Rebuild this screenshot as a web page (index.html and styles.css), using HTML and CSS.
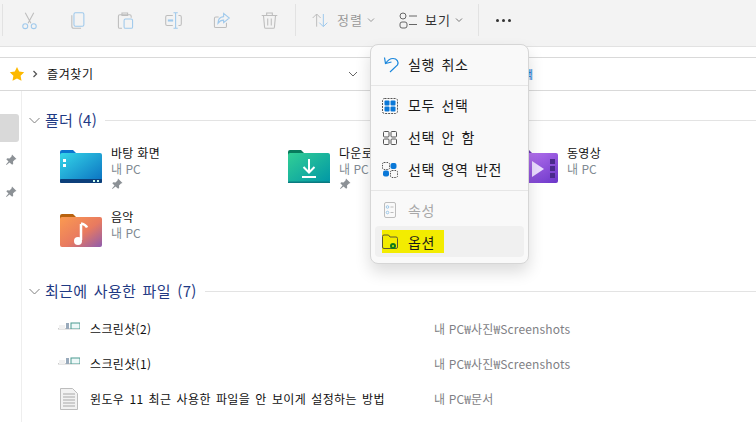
FILE: index.html
```html
<!DOCTYPE html>
<html lang="ko">
<head>
<meta charset="utf-8">
<title>즐겨찾기</title>
<link rel="stylesheet" href="styles.css">
</head>
<body>
<div class="toolbar">
  <span class="sep first"></span>
  <button class="tool"><svg viewBox="0 0 24 24" fill="none"><path class="g" d="M6 1l8 15M18 1l-8 15"/><circle class="b" cx="6" cy="20" r="3.500"/><circle class="b" cx="18" cy="20" r="3.500"/></svg></button>
  <button class="tool"><svg viewBox="0 0 24 24" fill="none"><rect class="b" x="7" y="1" width="14" height="19" rx="2"/><path class="g" d="M4 4.500V20a3 3 0 0 0 3 3h10"/></svg></button>
  <button class="tool"><svg viewBox="0 0 24 24" fill="none"><path class="g" d="M7 23H4a2 2 0 0 1-2-2V6a2 2 0 0 1 2-2h14a2 2 0 0 1 2 2v2M7 4V1.500h8V5H7z"/><rect class="b" x="10" y="10" width="12" height="13" rx="2"/></svg></button>
  <button class="tool"><svg viewBox="0 0 24 24" fill="none"><path class="g" d="M11 5H3a2 2 0 0 0-2 2v10a2 2 0 0 0 2 2h8M19 5h2a2 2 0 0 1 2 2v10a2 2 0 0 1-2 2h-2"/><path class="b" d="M12 1h6M15 1v22M12 23h6"/><path class="bf" d="M4 10.500h7.500V13.500H4z"/></svg></button>
  <button class="tool"><svg viewBox="0 0 24 24" fill="none"><path class="g" d="M19 15v5a2 2 0 0 1-2 2H4a2 2 0 0 1-2-2V9a2 2 0 0 1 2-2h4"/><path class="b" d="M15 2l8 6.500-8 6.500v-3.500c-4 0-6 1.500-8 4.500 0-5 3-9 8-9.500z"/></svg></button>
  <button class="tool"><svg viewBox="0 0 24 24" fill="none"><path class="g" d="M1 5h22M8 5V1.500h8V5M3.500 5l1.500 16a2 2 0 0 0 2 2h10a2 2 0 0 0 2-2l1.500-16M9.500 9v10M14.500 9v10"/></svg></button>
  <span class="sep"></span>
  <div class="labeled sort">
    <svg class="sort-icon" viewBox="0 0 24 24" fill="none"><path class="g" d="M7 22V3M1 9l6-6 6 6"/><path class="b" d="M17 3v19M11 16l6 6 6-6"/></svg>
    <span class="tool-label dim">정렬</span>
    <svg class="chev" width="8" height="6" viewBox="0 0 8 6" fill="none"><path d="M1 1.500l3 3 3-3" stroke="#9a9a9a"/></svg>
  </div>
  <div class="labeled view">
    <svg class="view-icon" viewBox="0 0 18 18" fill="none"><circle class="d" cx="4" cy="5" r="3"/><rect class="d" x="1" y="11" width="7" height="6" rx="2"/><path class="d" d="M10 5h8M10 13.500h8"/></svg>
    <span class="tool-label">보기</span>
    <svg class="chev" width="8" height="6" viewBox="0 0 8 6" fill="none"><path d="M1 1.500l3 3 3-3" stroke="#777"/></svg>
  </div>
  <span class="sep"></span>
  <div class="more"><i></i><i></i><i></i></div>
</div>

<div class="address">
  <svg class="star" width="16" height="16" viewBox="0 0 16 16"><path d="M8 1l2.200 4.600 5 .700-3.600 3.500.900 5L8 12.400l-4.500 2.400.900-5L.800 6.300l5-.700z" fill="#fdb900"/></svg>
  <svg class="crumb" width="6" height="8" viewBox="0 0 6 8" fill="none"><path d="M1.500 1l3 3-3 3" stroke="#555" stroke-width="1.300"/></svg>
  <span class="address-text">즐겨찾기</span>
  <svg class="address-chev" width="10" height="6" viewBox="0 0 10 6" fill="none"><path d="M1 1l4 4 4-4" stroke="#666"/></svg>
  <span class="search-hint">색</span>
</div>

<div class="body">
  <aside class="side">
    <div class="side-sel"></div>
    <svg class="side-pin" width="12" height="12" viewBox="0 0 12 12"><use href="#pin"/></svg>
    <svg class="side-pin" width="12" height="12" viewBox="0 0 12 12"><use href="#pin"/></svg>
  </aside>
  <main class="main">
    <h2 class="group-head folders">
      <svg width="11" height="7" viewBox="0 0 11 7" fill="none"><path d="M.500 1l5 5 5-5" stroke="#808080"/></svg>
      <span>폴더 (4)</span><i class="rule"></i>
    </h2>
    <div class="folder-grid">
      <div class="folder">
        <svg width="42" height="34" viewBox="0 0 42 34"><defs><linearGradient id="fb" x1="0" y1="0" x2="1" y2="1"><stop offset="0" stop-color="#35d6e8"/><stop offset="1" stop-color="#0a6fc0"/></linearGradient></defs><path d="M0 3a2 2 0 0 1 2-2h11l4 4v8H0z" fill="#0b76d0"/><rect y="4" width="42" height="30" rx="2" fill="url(#fb)"/><rect y="30" width="42" height="4" rx="1" fill="#0d3f7a"/><rect x="3" y="10" width="3" height="3" fill="#fff"/><rect x="3" y="15" width="3" height="3" fill="#fff"/><rect x="33" y="31" width="2" height="2" fill="#cfe"/><rect x="37" y="31" width="2" height="2" fill="#cfe"/></svg>
        <div class="folder-text"><b>바탕 화면</b><span>내 PC</span><svg class="pin" width="12" height="12" viewBox="0 0 12 12"><use href="#pin"/></svg></div>
      </div>
      <div class="folder">
        <svg width="42" height="34" viewBox="0 0 42 34"><defs><linearGradient id="fg" x1="0" y1="0" x2="1" y2="1"><stop offset="0" stop-color="#32cf95"/><stop offset="1" stop-color="#0096a6"/></linearGradient></defs><path d="M0 3a2 2 0 0 1 2-2h11l4 4v8H0z" fill="#087a5c"/><rect y="4" width="42" height="30" rx="2" fill="url(#fg)"/><rect y="32.500" width="42" height="1.500" fill="#0a7a80"/><path d="M21 10v13M15.500 18l5.500 5.500 5.500-5.500M14 28h14" stroke="#fff" stroke-width="2" fill="none"/></svg>
        <div class="folder-text"><b>다운로드</b><span>내 PC</span><svg class="pin" width="12" height="12" viewBox="0 0 12 12"><use href="#pin"/></svg></div>
      </div>
      <div class="folder">
        <svg width="42" height="34" viewBox="0 0 42 34"><defs><linearGradient id="fv" x1="0" y1="0" x2="1" y2="1"><stop offset="0" stop-color="#c27df5"/><stop offset="1" stop-color="#6a35c8"/></linearGradient></defs><path d="M0 3a2 2 0 0 1 2-2h11l4 4v8H0z" fill="#6a3cb0"/><rect y="4" width="42" height="30" rx="2" fill="url(#fv)"/><path d="M16 12l12 8-12 8z" fill="#eadcff"/><rect x="34" y="10" width="5" height="5" fill="#4a2a8c"/><rect x="34" y="17" width="5" height="5" fill="#4a2a8c"/><rect x="34" y="24" width="5" height="5" fill="#4a2a8c"/></svg>
        <div class="folder-text"><b>동영상</b><span>내 PC</span></div>
      </div>
      <div class="folder">
        <svg width="42" height="34" viewBox="0 0 42 34"><defs><linearGradient id="fm" x1="0" y1="0" x2="1" y2="1"><stop offset="0" stop-color="#fb9a50"/><stop offset=".55" stop-color="#e87a60"/><stop offset="1" stop-color="#8f5cae"/></linearGradient></defs><path d="M0 3a2 2 0 0 1 2-2h11l4 4v8H0z" fill="#b8620e"/><rect y="4" width="42" height="30" rx="2" fill="url(#fm)"/><path d="M21 11v16" stroke="#fff" stroke-width="2.500"/><path d="M21 10.500c2 .500 5 1.500 6 4" stroke="#fff" stroke-width="2.500" fill="none"/><circle cx="18" cy="28" r="4" fill="#fff"/></svg>
        <div class="folder-text"><b>음악</b><span>내 PC</span></div>
      </div>
    </div>

    <h2 class="group-head recent">
      <svg width="11" height="7" viewBox="0 0 11 7" fill="none"><path d="M.500 1l5 5 5-5" stroke="#808080"/></svg>
      <span>최근에 사용한 파일 (7)</span><i class="rule"></i>
    </h2>
    <div class="file"><svg class="file-icon" width="22" height="24" viewBox="0 0 22 24"><use href="#thumb"/></svg><span class="file-name">스크린샷(2)</span><span class="file-path">내 PC₩사진₩Screenshots</span></div>
    <div class="file"><svg class="file-icon" width="22" height="24" viewBox="0 0 22 24"><use href="#thumb"/></svg><span class="file-name">스크린샷(1)</span><span class="file-path">내 PC₩사진₩Screenshots</span></div>
    <div class="file"><svg class="file-icon" width="22" height="24" viewBox="0 0 22 24"><path d="M2.500 1.500h12l5 5v16h-17z" fill="#f2f2f2" stroke="#bdbdbd"/><path d="M5 7h12M5 10h12M5 13h12M5 16h12M5 19h12" stroke="#a8a8a8"/></svg><span class="file-name">윈도우 11 최근 사용한 파일을 안 보이게 설정하는 방법</span><span class="file-path">내 PC₩문서</span></div>
  </main>
</div>

<div class="menu">
  <div class="item"><svg width="20" height="20" viewBox="0 0 20 20" fill="none"><path d="M2.500 3.500l1 6 6-1.500M3.500 9.500C5.500 6.500 8 4.500 11 4.500c4 0 6 3.500 4.500 6.500L8 18" stroke="#1b87dc" stroke-width="1.200"/></svg><span>실행 취소</span></div>
  <hr class="div">
  <div class="item"><svg width="20" height="20" viewBox="2 -1 20 20" fill="none"><rect x="2.500" y="2.500" width="15" height="15" rx="2" stroke="#555" stroke-dasharray="2 1"/><rect x="4.500" y="4.500" width="5" height="5" rx="1" fill="#0a78d8"/><rect x="10.500" y="4.500" width="5" height="5" rx="1" fill="#0a78d8"/><rect x="4.500" y="10.500" width="5" height="5" rx="1" fill="#0a78d8"/><rect x="10.500" y="10.500" width="5" height="5" rx="1" fill="#0a78d8"/></svg><span>모두 선택</span></div>
  <div class="item"><svg width="20" height="20" viewBox="2 -1 20 20" fill="none"><rect x="3.500" y="3.500" width="5.500" height="5.500" rx="1" stroke="#555"/><rect x="11" y="3.500" width="5.500" height="5.500" rx="1" stroke="#555"/><rect x="3.500" y="11" width="5.500" height="5.500" rx="1" stroke="#555"/><rect x="11" y="11" width="5.500" height="5.500" rx="1" stroke="#555"/></svg><span>선택 안 함</span></div>
  <div class="item"><svg width="20" height="20" viewBox="2 -1 20 20" fill="none"><rect x="2.500" y="2.500" width="7" height="7" rx="1.500" stroke="#555" stroke-dasharray="1.500 1"/><rect x="10.500" y="3" width="6" height="6" rx="2" fill="#0a78d8"/><rect x="3" y="10.500" width="6" height="6" rx="2" fill="#0a78d8"/><rect x="10.500" y="10.500" width="7" height="7" rx="1.500" stroke="#555" stroke-dasharray="1.500 1"/></svg><span>선택 영역 반전</span></div>
  <hr class="div">
  <div class="item muted"><svg width="20" height="20" viewBox="2 0 20 20" fill="none"><rect x="4.500" y="2.500" width="11" height="15" rx="1.500" stroke="#bdbdbd"/><circle cx="7.500" cy="7" r="1.300" stroke="#9cc8ea"/><circle cx="7.500" cy="12.500" r="1.300" stroke="#9cc8ea"/><path d="M10.500 7h3M10.500 12.500h3" stroke="#bdbdbd"/></svg><span>속성</span></div>
  <div class="item hover"><div class="mark"><svg width="20" height="20" viewBox="0 0 20 20" fill="none"><path d="M.500 15V4.500A1.500 1.500 0 0 1 2 3h4.500L8 5h6a1.500 1.500 0 0 1 1.500 1.500V15A1.500 1.500 0 0 1 14 16.500H2A1.500 1.500 0 0 1 .500 15z" stroke="#4a4a3a" stroke-width=".9"/><circle cx="11" cy="14" r="3" fill="#0f7a1a"/><circle cx="11" cy="14" r="1" fill="#dfe800"/></svg><span>옵션</span></div></div>
</div>

<svg class="defs" width="0" height="0"><defs>
  <g id="pin"><path d="M7 .500l4.500 4.500-1.500.500-2 2 .2 2.200-1 1L4.500 8.500 1.500 11 1 10.500 3.500 7.500 1.300 5.300l1-1 2.200.200 2-2z" fill="#8c9196"/></g>
  <g id="thumb"><rect x="0" y="11" width="22" height="1.500" fill="#ccc"/><rect x="1" y="8" width="6" height="4" fill="#f1f1f1"/><rect x="8" y="6" width="3" height="6" fill="#9ab"/><rect x="13" y="6" width="9" height="6" fill="#eef8f8" stroke="#4a9a90" stroke-width="1"/><rect x="0" y="12" width="22" height="1" fill="#e5e5e5"/></g>
</defs></svg>
</body>
</html>
```
FILE: styles.css
```css
* { box-sizing: border-box; }
html, body { margin: 0; padding: 0; }
body {
  width: 756px;
  height: 422px;
  overflow: hidden;
  position: relative;
  background: #fff;
  font-family: "Noto Sans CJK KR", "Noto Sans", sans-serif;
  font-size: 12px;
  color: #1a1a1a;
}
svg { display: block; flex: none; }
.defs { position: absolute; }

.toolbar {
  height: 47px;
  background: #f3f3f3;
  border-bottom: 1px solid #e2e2e2;
  display: flex;
  align-items: flex-start;
  padding-left: 2px;
}
.sep { width: 1px; height: 32px; margin-top: 4px; background: #e2e2e2; flex: none; }
.tool {
  width: 48px;
  height: 40px;
  border: 0;
  padding: 0;
  background: none;
  display: flex;
  align-items: center;
  justify-content: center;
}
.tool svg { width: 17px; height: 17px; overflow: visible; }
.tool:first-of-type { margin-left: 2px; }
.tool + .sep { margin-left: 2px; }
.g { stroke: #bdbdbd; stroke-width: 1.500; }
.b { stroke: #9fc9ec; stroke-width: 1.500; }
.bf { fill: #9fc9ec; }
.d { stroke: #666; stroke-width: 1; }
.labeled { height: 40px; display: flex; align-items: center; }
.sort { width: 94px; padding-left: 16px; }
.sort-icon { width: 16px; height: 16px; }
.view { width: 88px; padding-left: 9px; }
.view-icon { width: 18px; height: 18px; margin-right: 8px; }
.tool-label { font-size: 13px; letter-spacing: 1px; line-height: 18px; color: #333; }
.sort .tool-label { margin-left: 9px; }
.tool-label.dim { color: #9a9a9a; }
.chev { margin-left: 4px; }
.more { display: flex; gap: 3px; height: 40px; align-items: center; margin-left: 17px; }
.more i { width: 3px; height: 3px; border-radius: 50%; background: #333; }

.address {
  height: 34px;
  margin-top: 10px;
  border-top: 1px solid #d9d9d9;
  border-bottom: 1px solid #d9d9d9;
  display: flex;
  align-items: center;
  padding-left: 9px;
  background: #fff;
}
.crumb { margin-left: 7px; }
.address-text { margin-left: 9px; font-size: 12px; line-height: 16px; letter-spacing: .6px; color: #111; }
.address-chev { margin-left: 254px; }
.search-hint { margin-left: 165px; font-size: 11px; color: #1b6fd0; background: #cfe3f7; line-height: 11px; }

.body { display: flex; height: 332px; }
.side {
  width: 22px;
  flex: none;
  border-right: 1px solid #eeeeee;
  padding-top: 23px;
  display: flex;
  flex-direction: column;
}
.side-sel { width: 19px; height: 28px; background: #d9d9d9; border-radius: 0 3px 3px 0; margin-bottom: 12px; }
.side-pin { margin: 0 0 20px 5px; }

.main { flex: 1; min-width: 0; position: relative; }
.group-head {
  margin: 0;
  display: flex;
  align-items: center;
  font-weight: 400;
  font-size: 15px;
  line-height: 20px;
  letter-spacing: .3px;
  color: #1f3a84;
  padding-left: 7px;
}
.group-head span { margin-left: 5px; white-space: nowrap; }
.group-head .rule { flex: 1; height: 1px; background: #e3e3e3; margin-left: 8px; }
.group-head.folders { margin-top: 19px; }
.group-head.recent { margin-top: 12px; word-spacing: 2px; }

.folder-grid {
  display: grid;
  grid-template-columns: repeat(3, 228px);
  grid-auto-rows: 64px;
  padding: 11px 0 0 38px;
}
.folder { display: flex; align-items: flex-start; }
.folder > svg { margin-top: 8px; }
.folder-text { margin: 4px 0 0 9px; display: flex; flex-direction: column; }
.folder-text b { font-weight: 400; font-size: 12px; line-height: 16px; color: #111; letter-spacing: .3px; }
.folder-text span { font-size: 12px; line-height: 16px; color: #808a92; }
.pin { margin-top: 1px; }

.file {
  display: flex;
  align-items: center;
  height: 35px;
  padding-left: 36px;
}
.group-head.recent + .file { margin-top: 10px; }
.file-icon { margin-right: 10px; }
.file-name { width: 344px; font-size: 12px; letter-spacing: .35px; word-spacing: 1.500px; color: #111; white-space: nowrap; }
.file-path { font-size: 12px; letter-spacing: .15px; color: #7f7f85; white-space: nowrap; }

.menu {
  position: absolute;
  left: 370px;
  top: 44px;
  width: 159px;
  height: 220px;
  padding: 3px 4px;
  background: #f9f9f9;
  border: 1px solid #d6d6d6;
  border-radius: 8px;
  box-shadow: 0 8px 16px rgba(0, 0, 0, .14);
}
.item {
  height: 32px;
  display: flex;
  align-items: center;
  padding-left: 7px;
  font-size: 14px;
  letter-spacing: .6px;
  word-spacing: 2px;
  color: #1a1a1a;
  white-space: nowrap;
}
.item > span { margin-left: 6px; }
.item.muted { color: #a8a8a8; }
.item.hover { background: #f0f0f0; border-radius: 4px; height: 31px; padding-left: 0; align-items: flex-start; }
.mark {
  display: flex;
  align-items: center;
  gap: 6px;
  margin: 4px 0 0 7px;
  width: 62px;
  height: 23px;
  background: #f3ec00;
}
.div { margin: 5px -4px 3px; height: 1px; border: 0; background: #e6e6e6; }
```
